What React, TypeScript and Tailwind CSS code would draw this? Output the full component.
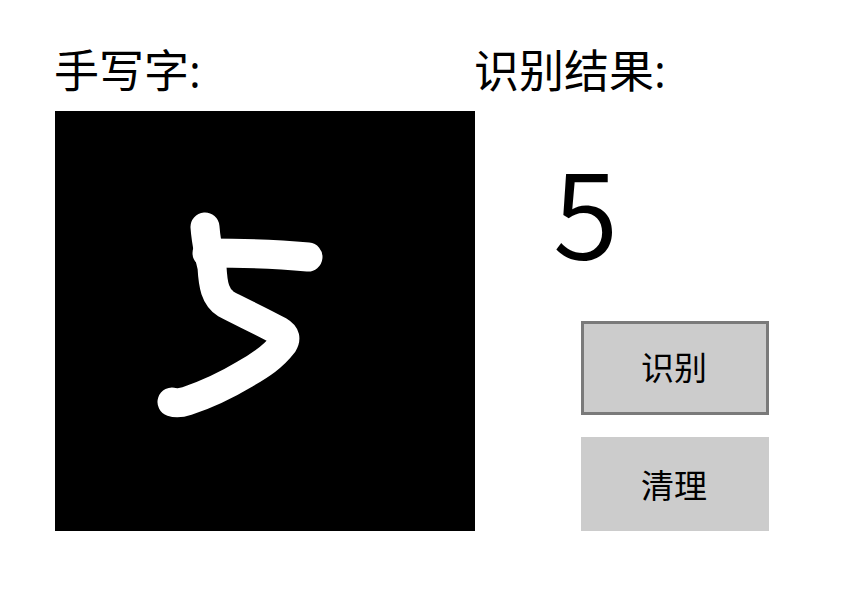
export default function App() {
  return (
    <div className="min-h-[610px] w-[843px] bg-white pl-[55px] pt-[39px] text-black font-['Open_Sans','Noto_Sans_CJK_SC',sans-serif]">
      <div className="flex">
        {/* Left column: drawing canvas */}
        <div className="w-[420px]">
          <h2 className="-ml-[1px] h-[72px] text-[45px] leading-[64px] font-normal">手写字:</h2>
          <div className="h-[420px] w-[420px] bg-black">
            <svg width="420" height="420" viewBox="0 0 420 420" fill="none" stroke="#fff" strokeWidth="29" strokeLinecap="round" strokeLinejoin="round" className="block">
              <path d="M150 116 C151 130 154 144 157 156 C158 174 160 186 171 193 C186 201 206 210 224 220 C231 224 231 228 228 233 C218 246 206 254 190 263 C170 275 150 284 132 290 C126 292 120 292 117 291" />
              <path d="M152 142 C185 142 220 143 253 146" />
            </svg>
          </div>
        </div>
        {/* Right column: result and buttons */}
        <div className="w-[294px]">
          <h2 className="-ml-[1px] h-[72px] text-[45px] leading-[64px] font-normal">识别结果:</h2>
          <div className="ml-[78px] h-[210px] pt-[31px] text-[119px] leading-[130px] font-[350] font-['Noto_Sans_CJK_SC',sans-serif]">5</div>
          <div className="ml-[106px] flex w-[188px] flex-col gap-[22px]">
            <button className="h-[94px] border-[3px] border-[#7a7a7a] bg-[#cccccc] pr-[2px] text-[33px]">识别</button>
            <button className="h-[94px] bg-[#cccccc] pt-[3px] pr-[2px] text-[33px]">清理</button>
          </div>
        </div>
      </div>
    </div>
  );
}
